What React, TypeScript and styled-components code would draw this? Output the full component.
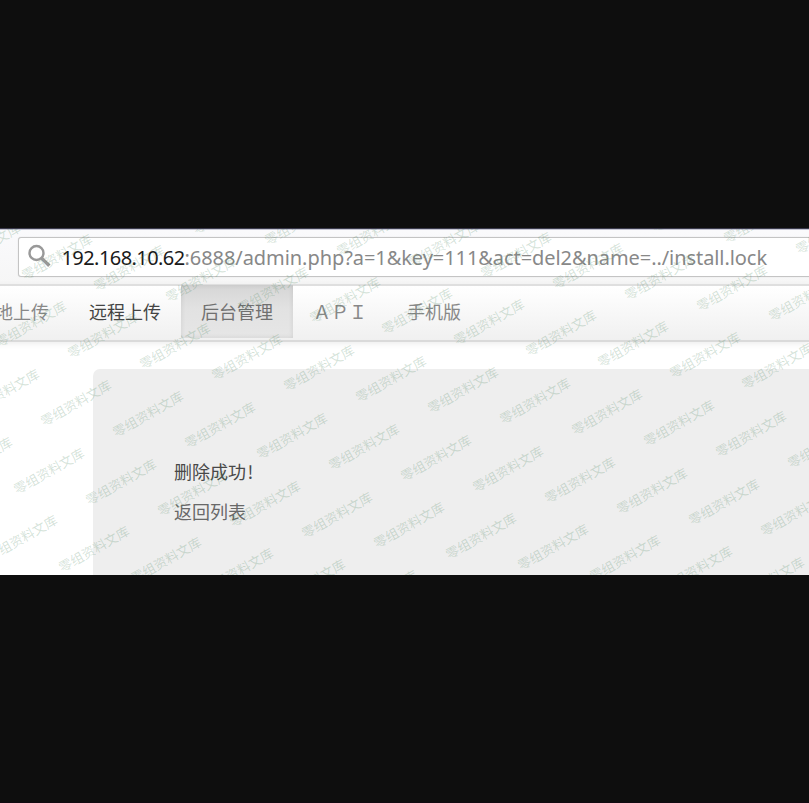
import React from "react";
import styled, { createGlobalStyle } from "styled-components";

const GlobalStyle = createGlobalStyle`
  * { box-sizing: border-box; }
  body {
    margin: 0;
    background: #0e0e0e;
    overflow: hidden;
    font-family: "Noto Sans CJK SC", sans-serif;
  }
`;

const Screen = styled.div`
  width: 809px;
  height: 803px;
  padding-top: 228px;
  background: #0e0e0e;
  border-bottom: 1px solid #110a11;
  overflow: hidden;
`;

const Browser = styled.main`
  position: relative;
  display: flex;
  flex-direction: column;
  height: 347px;
  background: #fff;
  border-top: 1px solid #39394a;
  overflow: hidden;
`;

const AddressBar = styled.div`
  flex: none;
  height: 55px;
  padding: 7px 0 0 18px;
  background: linear-gradient(#fafafc, #f6f6f6);
  border-top: 1px solid #c4c4d2;
`;

const AddressField = styled.div`
  display: flex;
  align-items: center;
  width: 820px;
  height: 40px;
  padding-left: 8px;
  background: #fff;
  border: 1px solid #c4c4c4;
  border-radius: 3px;
  box-shadow: 0 0 1px rgba(0, 0, 0, 0.2);
`;

const SearchIcon = styled.svg`
  flex: none;
  width: 26px;
  height: 26px;
  margin-right: 8.5px;
  fill: none;
  stroke: #999;
`;

const Url = styled.div`
  display: flex;
  padding-top: 1px;
  font-family: "Noto Sans", sans-serif;
  font-size: 20px;
  line-height: 30px;
  white-space: pre;
`;

const Host = styled.span`
  color: #1a1a1a;
  letter-spacing: -0.57px;
`;

const Path = styled.span`
  color: #888;
  letter-spacing: -0.07px;
`;

const Nav = styled.nav`
  flex: none;
  display: flex;
  height: 58px;
  margin-left: -43px;
  background: linear-gradient(#fff, #f0f0f0);
  border-top: 2px solid #dfdfdf;
  border-bottom: 2px solid #dadada;
  box-shadow: 0 2px 6px rgba(0, 0, 0, 0.07);
`;

const Tab = styled.span<{ $tone?: string; $active?: boolean }>`
  height: 53px;
  margin-top: -1px;
  padding: 0 20px;
  line-height: 53px;
  font-size: 18px;
  white-space: nowrap;
  color: ${(p) => p.$tone ?? "#888"};
  background: ${(p) => (p.$active ? "linear-gradient(#d6d6d6, #e2e2e2 45%, #e6e6e6)" : "none")};
  box-shadow: ${(p) => (p.$active ? "inset 0 0 5px rgba(0, 0, 0, 0.1)" : "none")};
`;

const Card = styled.section`
  flex: 1;
  margin: 27px 0 0 93px;
  padding: 82px 81px 0;
  background: #eee;
  border-radius: 7px 0 0 0;
`;

const Message = styled.p<{ $tone: string }>`
  margin: 0;
  height: 40px;
  font-size: 18px;
  line-height: 40px;
  color: ${(p) => p.$tone};
`;

const Mark = styled.span`
  margin-left: 1.5px;
`;

const WatermarkLayer = styled.div`
  position: absolute;
  inset: 0;
  overflow: hidden;
  pointer-events: none;
`;

const Watermark = styled.span`
  position: absolute;
  width: 80px;
  height: 18px;
  margin: -9px 0 0 -40px;
  font-size: 13.1px;
  line-height: 18px;
  text-align: center;
  white-space: nowrap;
  color: rgba(60, 125, 80, 0.22);
  transform: rotate(-29.5deg);
`;

const marks: { x: number; y: number }[] = [];
for (let row = -4; row <= 3; row++) {
  for (let col = -8; col <= 9; col++) {
    const x = 363.9 + col * 72 - row * 26.75;
    const y = 217.8 + col * 10.95 + row * 67.7;
    if (x > -38 && x < 846 && y > -22 && y < 368) marks.push({ x, y });
  }
}

export default function App() {
  return (
    <Screen>
      <GlobalStyle />
      <Browser>
        <AddressBar>
          <AddressField>
            <SearchIcon viewBox="0 0 26 26">
              <circle cx="9.5" cy="9" r="7" strokeWidth="2.4" />
              <path d="M14.8 14.4 22.3 21.8" strokeWidth="3.4" />
            </SearchIcon>
            <Url>
              <Host>192.168.10.62</Host>
              <Path>:6888/admin.php?a=1&amp;key=111&amp;act=del2&amp;name=../install.lock</Path>
            </Url>
          </AddressField>
        </AddressBar>
        <Nav>
          <Tab>本地上传</Tab>
          <Tab $tone="#444">远程上传</Tab>
          <Tab $tone="#707070" $active>后台管理</Tab>
          <Tab>ＡＰＩ</Tab>
          <Tab>手机版</Tab>
        </Nav>
        <Card>
          <Message $tone="#484848">删除成功<Mark>!</Mark></Message>
          <Message $tone="#686868">返回列表</Message>
        </Card>
        <WatermarkLayer aria-hidden="true">
          {marks.map((m) => (
            <Watermark key={`${m.x}:${m.y}`} style={{ left: m.x, top: m.y }}>
              零组资料文库
            </Watermark>
          ))}
        </WatermarkLayer>
      </Browser>
    </Screen>
  );
}
